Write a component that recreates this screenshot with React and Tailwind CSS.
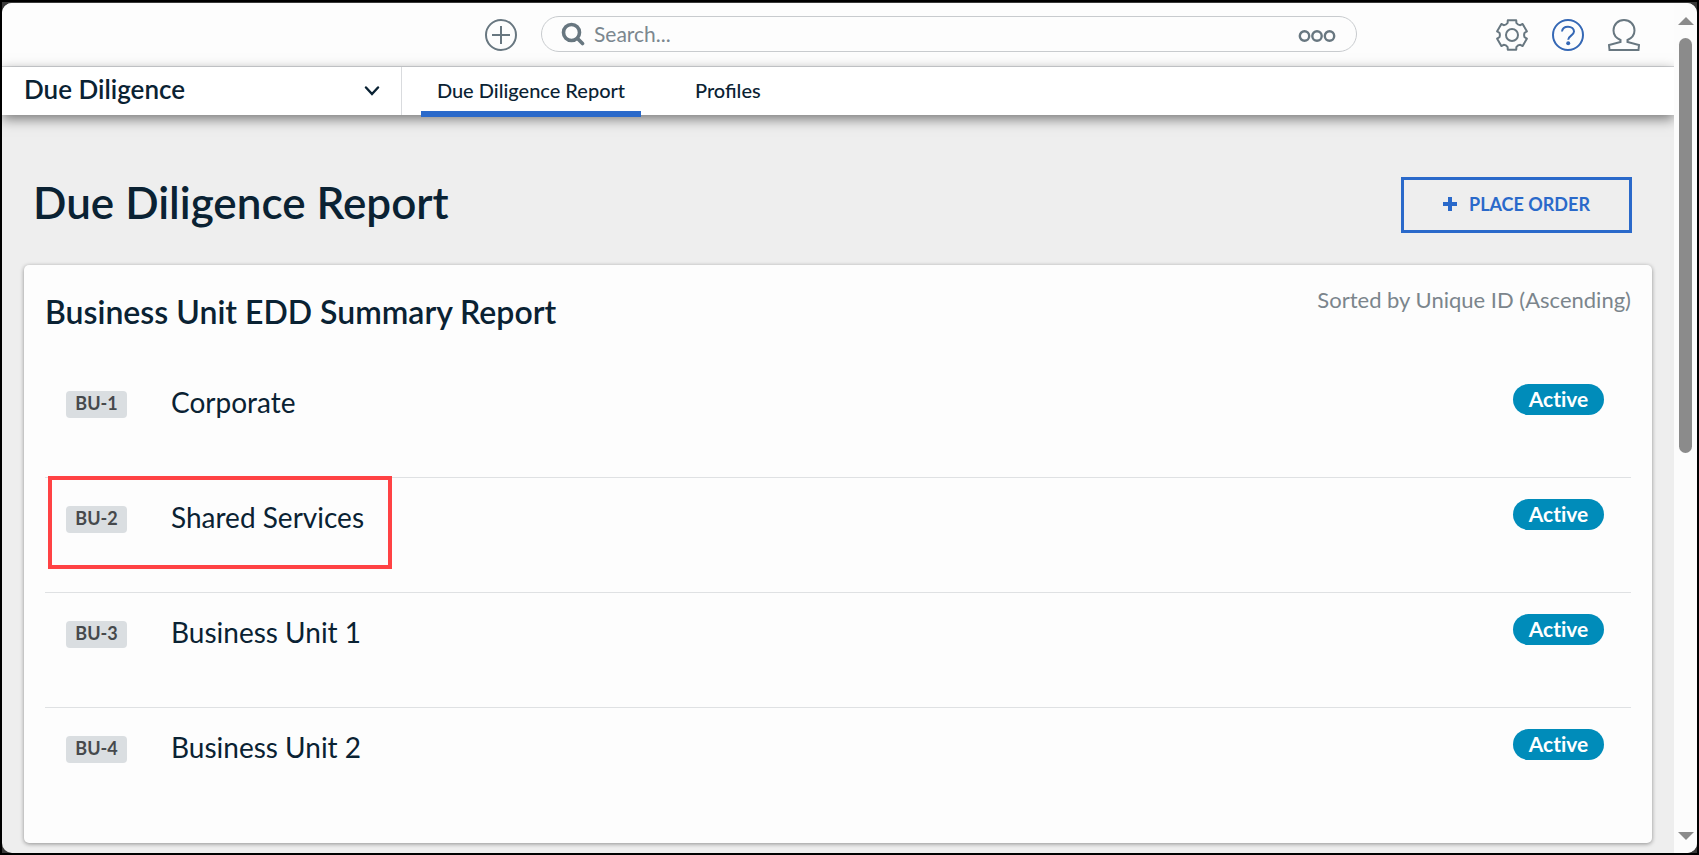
const units = [
  { id: "BU-1", name: "Corporate", status: "Active" },
  { id: "BU-2", name: "Shared Services", status: "Active", highlighted: true },
  { id: "BU-3", name: "Business Unit 1", status: "Active" },
  { id: "BU-4", name: "Business Unit 2", status: "Active" },
];

// Six teeth, with a shallow curved valley between each pair.
function gearOutline() {
  const at = (a, r) => `${(16 + r * Math.cos(a)).toFixed(2)} ${(16 + r * Math.sin(a)).toFixed(2)}`;
  let path = "";
  for (let i = 0; i < 6; i++) {
    const a = (i * Math.PI) / 3 - Math.PI / 2;
    path += `${i === 0 ? "M" : "L"}${at(a - 0.28, 15.3)}L${at(a + 0.28, 15.3)}`;
    path += `L${at(a + 0.35, 12.8)}Q${at(a + Math.PI / 6, 11.6)} ${at(a + Math.PI / 3 - 0.35, 12.8)}`;
  }
  return `${path}Z`;
}

function IconButton({ label, className, children }) {
  return (
    <button type="button" aria-label={label} className={`size-8 shrink-0 ${className}`}>
      <svg viewBox="0 0 32 32" className="size-8" fill="none" stroke="currentColor" strokeWidth="2" strokeLinejoin="round">
        {children}
      </svg>
    </button>
  );
}

function TopBar() {
  return (
    <header className="flex h-[64px] items-center border-b border-[#d9dbde] bg-[#fdfdfd] pr-[34px] pl-[483px]">
      <IconButton label="Create" className="text-[#687780]">
        <circle cx="16" cy="16" r="15" />
        <path d="M16 7v18M7 16h18" />
      </IconButton>
      <div className="mb-[2px] ml-6 flex h-9 w-[816px] min-w-0 items-center rounded-full border border-[#c8cbce] pr-5 pl-[19px]">
        <svg viewBox="0 0 24 24" className="size-6 shrink-0 text-[#687780]" fill="none" stroke="currentColor" strokeLinecap="round">
          <circle cx="10.5" cy="10.5" r="8" strokeWidth="3.6" />
          <path d="M16.5 16.5l5 5" strokeWidth="3.6" />
        </svg>
        <input
          type="text"
          aria-label="Search"
          placeholder="Search..."
          className="ml-[9px] min-w-0 flex-1 bg-transparent text-[21px] text-[#687780] outline-none placeholder:text-[#7b878f]"
        />
        <button type="button" aria-label="Search options" className="shrink-0 text-[#687780]">
          <svg viewBox="0 0 38 12" className="mt-1 h-3 w-[38px]" fill="none" stroke="currentColor" strokeWidth="2.4">
            <circle cx="6.5" cy="6" r="4.7" />
            <circle cx="19" cy="6" r="4.7" />
            <circle cx="31.5" cy="6" r="4.7" />
          </svg>
        </button>
      </div>
      <div className="ml-auto flex gap-6">
        <IconButton label="Settings" className="text-[#687780]">
          <path d={gearOutline()} />
          <circle cx="16" cy="16" r="6" />
        </IconButton>
        <IconButton label="Help" className="text-[#3568b5]">
          <circle cx="16" cy="16" r="15" />
          <path d="M10 12.5C10.3 9.5 12.8 7.8 16 7.8C19.5 7.8 22 9.8 22 12.6C22 16.5 16.2 16.8 16.2 20.8" />
          <circle cx="16.2" cy="24.3" r="2" fill="currentColor" stroke="none" />
        </IconButton>
        <IconButton label="Account" className="text-[#687780]">
          <path d="M12.5 21C8 19 5.5 15.5 5.5 11.5C5.5 5.5 10 1 16 1C22 1 26.5 5.5 26.5 11.5C26.5 15.5 24 19 19.5 21V23L31 26L30.5 31H1.5L1 26L12.5 23Z" strokeLinejoin="miter" />
        </IconButton>
      </div>
    </header>
  );
}

function NavBar() {
  return (
    <nav className="relative flex h-12 bg-white shadow-[0_4px_12px_rgba(0,0,0,0.5)]">
      <button type="button" className="flex w-[400px] shrink-0 items-center justify-between border-r border-[#d9dbde] pr-[21px] pb-1 pl-[22px] text-[26px] font-semibold text-[#0a2233]">
        Due Diligence
        <svg viewBox="0 0 16 10" className="mt-1 h-[10px] w-4" fill="none" stroke="currentColor" strokeWidth="2.4" strokeLinecap="round">
          <path d="M2 1.5L8 8L14 1.5" />
        </svg>
      </button>
      <a href="#report" aria-current="page" className="ml-[19px] flex h-[50px] w-[220px] shrink-0 items-center justify-center border-b-[6px] border-[#2a69ca] pt-[2px] text-[20px] font-medium text-[#0a2233]">
        Due Diligence Report
      </a>
      <a href="#profiles" className="ml-[38px] flex items-center px-4 pb-[2px] text-[20px] font-medium text-[#0a2233]">
        Profiles
      </a>
    </nav>
  );
}

function UnitRow({ unit }) {
  return (
    <li className="relative flex h-[115px] items-start justify-between border-b border-[#dfe1e3] pt-5 pr-[27px] pl-[21px] last:border-b-0">
      {unit.highlighted && (
        <div className="pointer-events-none absolute -top-[2px] left-[3px] h-[93px] w-[344px] border-4 border-[#ff4244]" />
      )}
      <div className="flex items-center gap-11">
        <span className="mt-1 flex h-[27px] w-[61px] items-center justify-center rounded bg-[#dadee1] pb-[2px] text-[18px] font-bold text-[#46494c]">
          {unit.id}
        </span>
        <a href={`#${unit.id}`} className="text-[28px] leading-[38px] text-[#0a2233]">
          {unit.name}
        </a>
      </div>
      <span className="mt-px flex h-[31px] w-[91px] items-center justify-center rounded-full bg-[#008cba] pb-[2px] text-[21px] font-bold text-white [font-variant-ligatures:none]">
        {unit.status}
      </span>
    </li>
  );
}

function ScrollTrack() {
  return (
    <div aria-hidden="true" className="flex w-[23px] shrink-0 flex-col items-center bg-[#fcfcfc] pt-[14px] pb-[13px]">
      <svg viewBox="0 0 16 8" className="h-2 w-4" fill="#8b8b8b"><path d="M8 0L16 8H0Z" /></svg>
      <div className="mt-[13px] h-[415px] w-[13px] rounded-full bg-[#8b8b8b]" />
      <svg viewBox="0 0 16 8" className="mt-auto h-2 w-4" fill="#8b8b8b"><path d="M8 8L16 0H0Z" /></svg>
    </div>
  );
}

export default function App() {
  return (
    <div className="flex min-h-screen bg-black p-[2px] font-['Lato',sans-serif]">
      <div className="flex flex-1 bg-[#3a3a3a] pt-px">
        <div className="flex flex-1 overflow-hidden rounded-[10px] bg-[#eeeeee]">
          <div className="flex min-w-0 flex-1 flex-col overflow-hidden">
            <TopBar />
            <NavBar />
            <main className="flex-1 pr-[22px] pb-[9px] pl-[22px]">
              <div className="flex h-[150px] items-center justify-between pt-[30px] pr-5 pl-[9px]">
                <h1 className="pb-[6px] text-[44px] font-semibold text-[#0a2233]">Due Diligence Report</h1>
                <button type="button" className="flex h-14 w-[231px] items-center justify-center gap-3 border-[3px] border-[#2a69ca] pb-[2px] text-[18px] font-bold text-[#2a69ca]">
                  <svg viewBox="0 0 14 14" className="size-[14px]" fill="none" stroke="currentColor" strokeWidth="4">
                    <path d="M7 0V14M0 7H14" />
                  </svg>
                  PLACE ORDER
                </button>
              </div>
              <section className="rounded-[5px] bg-[#fdfdfd] px-[21px] shadow-[0_1px_4px_rgba(0,0,0,0.4)]">
                <div className="flex h-[98px] items-start justify-between pt-5">
                  <h2 className="pt-1 text-[32px] leading-[46px] font-semibold text-[#0a2233]">Business Unit EDD Summary Report</h2>
                  <p className="text-[22px] leading-[30px] text-[#7b858c]">Sorted by Unique ID (Ascending)</p>
                </div>
                <ul className="pb-5">
                  {units.map((unit) => (
                    <UnitRow key={unit.id} unit={unit} />
                  ))}
                </ul>
              </section>
            </main>
          </div>
          <ScrollTrack />
        </div>
      </div>
    </div>
  );
}
